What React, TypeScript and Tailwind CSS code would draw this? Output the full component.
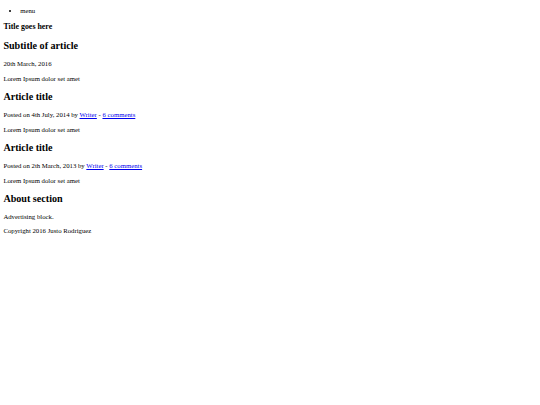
const linkCls = 'text-[#0000ee] underline';

function Post({ title, date, children }: { title: string; date?: string; children?: React.ReactNode }) {
    return (
        <article>
            <h2 className="text-[10.125px] font-bold my-[8.4px]">{title}</h2>
            {date && <p className="my-[6.75px]">{date}</p>}
            {children}
            <p className="my-[6.75px]">Lorem Ipsum dolor set amet</p>
        </article>
    );
}

export default function App() {
    return (
        <div className="min-h-screen bg-white text-black px-[3.375px] text-[6.75px] leading-[1.16] font-['Liberation_Serif','Times_New_Roman',serif]">
            <header>
                <nav>
                    <ul className="list-disc my-[6.75px] pl-[16.875px]">
                        <li>menu</li>
                    </ul>
                </nav>
                <h3 className="text-[7.9px] font-bold my-[7.9px]">Title goes here</h3>
            </header>
            <main>
                <Post title="Subtitle of article" date="20th March, 2016" />
                <article>
                    <h2 className="text-[10.125px] font-bold my-[8.4px]">Article title</h2>
                    <p className="my-[6.75px]">
                        Posted on 4th July, 2014 by <a href="#" className={linkCls}>Writer</a> - <a href="#" className={linkCls}>6 comments</a>
                    </p>
                    <p className="my-[6.75px]">Lorem Ipsum dolor set amet</p>
                </article>
                <article>
                    <h2 className="text-[10.125px] font-bold my-[8.4px]">Article title</h2>
                    <p className="my-[6.75px]">
                        Posted on 2th March, 2013 by <a href="#" className={linkCls}>Writer</a> - <a href="#" className={linkCls}>6 comments</a>
                    </p>
                    <p className="my-[6.75px]">Lorem Ipsum dolor set amet</p>
                </article>
            </main>
            <aside>
                <h2 className="text-[10.125px] font-bold my-[8.4px]">About section</h2>
                <p className="my-[6.75px]">Advertising block.</p>
            </aside>
            <footer>
                <p className="my-[6.75px]">Copyright 2016 Justo Rodriguez</p>
            </footer>
        </div>
    );
}
